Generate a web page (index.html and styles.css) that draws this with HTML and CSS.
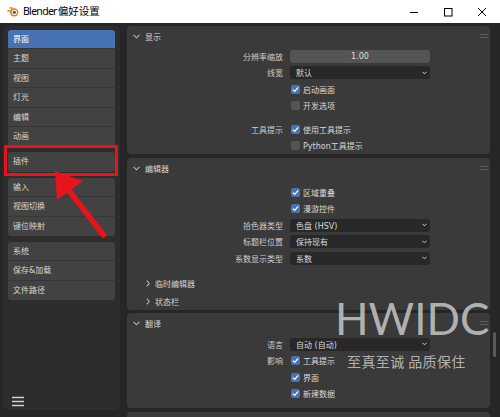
FILE: index.html
```html
<!DOCTYPE html>
<html lang="zh">
<head>
<meta charset="utf-8">
<title>Blender偏好设置</title>
<link rel="stylesheet" href="styles.css">
</head>
<body>
<div class="app">
  <header class="titlebar">
    <svg class="logo" viewBox="0 0 12 11" width="12" height="11">
      <path d="M0.4 4.3 H5 L4.2 5.8 H0.4 Z" fill="#e87d0d"/>
      <path d="M2.2 1.2 L6.5 1.6 L5.6 3 L2.2 2.2 Z" fill="#e87d0d"/>
      <circle cx="7.2" cy="6.4" r="4.2" fill="#e87d0d"/>
      <circle cx="7.4" cy="6.3" r="2.6" fill="#fff"/>
      <circle cx="7.4" cy="6.3" r="1.5" fill="#265787"/>
    </svg>
    <span class="title"><span class="title-latin">Blender</span>偏好设置</span>
    <div class="controls">
      <span class="ctl"><svg width="10" height="10" viewBox="0 0 10 10"><path d="M1 5.5 H9" stroke="#000" stroke-width="1"/></svg></span>
      <span class="ctl"><svg width="10" height="10" viewBox="0 0 10 10"><rect x="1.5" y="1.5" width="7.5" height="7.5" fill="none" stroke="#000" stroke-width="1"/></svg></span>
      <span class="ctl"><svg width="10" height="10" viewBox="0 0 10 10"><path d="M1 1 L9 9 M9 1 L1 9" stroke="#000" stroke-width="1"/></svg></span>
    </div>
  </header>

  <div class="window">
    <nav class="sidebar">
      <div class="nav-groups">
        <div class="group">
          <div class="item active">界面</div>
          <div class="item">主题</div>
          <div class="item">视图</div>
          <div class="item">灯光</div>
          <div class="item">编辑</div>
          <div class="item">动画</div>
        </div>
        <div class="group">
          <div class="item">插件</div>
        </div>
        <div class="group">
          <div class="item">输入</div>
          <div class="item">视图切换</div>
          <div class="item">键位映射</div>
        </div>
        <div class="group">
          <div class="item">系统</div>
          <div class="item">保存&amp;加载</div>
          <div class="item">文件路径</div>
        </div>
      </div>
      <div class="hamburger">
        <svg width="12" height="11" viewBox="0 0 12 11"><path d="M0 1.5 H12 M0 5.5 H12 M0 9.5 H12" stroke="#d0d0d0" stroke-width="1.6"/></svg>
      </div>
    </nav>

    <main class="main">
      <section class="panel p1">
        <div class="panel-header">
          <svg class="chev-down" width="7" height="5" viewBox="0 0 7 5"><path d="M0.6 0.8 L3.5 3.8 L6.4 0.8" fill="none" stroke="#b8b8b8" stroke-width="1.1"/></svg>
          <span>显示</span>
          <svg class="grip" width="8" height="4" viewBox="0 0 8 4"><path d="M0 0.5 H8 M0 3.5 H8" stroke="#5c5c5c" stroke-width="1"/></svg>
        </div>
        <div class="rows">
          <div class="row"><span class="label">分辨率缩放</span><div class="num">1.00</div></div>
          <div class="row"><span class="label">线宽</span><div class="dropdown"><span>默认</span><svg width="5" height="4" viewBox="0 0 5 4"><path d="M0.5 0.8 L2.5 2.8 L4.5 0.8" fill="none" stroke="#cfcfcf" stroke-width="1"/></svg></div></div>
          <div class="row"><span class="label"></span><div class="check-cell"><span class="box on"><svg width="9" height="9" viewBox="0 0 9 9"><path d="M1.8 4.6 L3.7 6.4 L7.2 2.4" fill="none" stroke="#fff" stroke-width="1.3"/></svg></span><span>启动画面</span></div></div>
          <div class="row"><span class="label"></span><div class="check-cell"><span class="box"></span><span>开发选项</span></div></div>
          <div class="row gap-before"><span class="label">工具提示</span><div class="check-cell"><span class="box on"><svg width="9" height="9" viewBox="0 0 9 9"><path d="M1.8 4.6 L3.7 6.4 L7.2 2.4" fill="none" stroke="#fff" stroke-width="1.3"/></svg></span><span>使用工具提示</span></div></div>
          <div class="row"><span class="label"></span><div class="check-cell"><span class="box"></span><span>Python工具提示</span></div></div>
        </div>
      </section>

      <section class="panel p2">
        <div class="panel-header">
          <svg class="chev-down" width="7" height="5" viewBox="0 0 7 5"><path d="M0.6 0.8 L3.5 3.8 L6.4 0.8" fill="none" stroke="#b8b8b8" stroke-width="1.1"/></svg>
          <span>编辑器</span>
          <svg class="grip" width="8" height="4" viewBox="0 0 8 4"><path d="M0 0.5 H8 M0 3.5 H8" stroke="#5c5c5c" stroke-width="1"/></svg>
        </div>
        <div class="rows">
          <div class="row"><span class="label"></span><div class="check-cell"><span class="box on"><svg width="9" height="9" viewBox="0 0 9 9"><path d="M1.8 4.6 L3.7 6.4 L7.2 2.4" fill="none" stroke="#fff" stroke-width="1.3"/></svg></span><span>区域重叠</span></div></div>
          <div class="row"><span class="label"></span><div class="check-cell"><span class="box on"><svg width="9" height="9" viewBox="0 0 9 9"><path d="M1.8 4.6 L3.7 6.4 L7.2 2.4" fill="none" stroke="#fff" stroke-width="1.3"/></svg></span><span>漫游控件</span></div></div>
          <div class="row"><span class="label">拾色器类型</span><div class="dropdown"><span>色盘 (HSV)</span><svg width="5" height="4" viewBox="0 0 5 4"><path d="M0.5 0.8 L2.5 2.8 L4.5 0.8" fill="none" stroke="#cfcfcf" stroke-width="1"/></svg></div></div>
          <div class="row"><span class="label">标题栏位置</span><div class="dropdown"><span>保持现有</span><svg width="5" height="4" viewBox="0 0 5 4"><path d="M0.5 0.8 L2.5 2.8 L4.5 0.8" fill="none" stroke="#cfcfcf" stroke-width="1"/></svg></div></div>
          <div class="row"><span class="label">系数显示类型</span><div class="dropdown"><span>系数</span><svg width="5" height="4" viewBox="0 0 5 4"><path d="M0.5 0.8 L2.5 2.8 L4.5 0.8" fill="none" stroke="#cfcfcf" stroke-width="1"/></svg></div></div>
        </div>
        <div class="subpanels">
          <div class="subpanel"><svg width="4" height="7" viewBox="0 0 4 7"><path d="M0.7 0.6 L3.3 3.5 L0.7 6.4" fill="none" stroke="#b8b8b8" stroke-width="1.1"/></svg><span>临时编辑器</span></div>
          <div class="subpanel"><svg width="4" height="7" viewBox="0 0 4 7"><path d="M0.7 0.6 L3.3 3.5 L0.7 6.4" fill="none" stroke="#b8b8b8" stroke-width="1.1"/></svg><span>状态栏</span></div>
        </div>
      </section>

      <section class="panel p3">
        <div class="panel-header">
          <svg class="chev-down" width="7" height="5" viewBox="0 0 7 5"><path d="M0.6 0.8 L3.5 3.8 L6.4 0.8" fill="none" stroke="#b8b8b8" stroke-width="1.1"/></svg>
          <span>翻译</span>
          <svg class="grip" width="8" height="4" viewBox="0 0 8 4"><path d="M0 0.5 H8 M0 3.5 H8" stroke="#5c5c5c" stroke-width="1"/></svg>
        </div>
        <div class="rows">
          <div class="row"><span class="label">语言</span><div class="dropdown"><span>自动 (自动)</span><svg width="5" height="4" viewBox="0 0 5 4"><path d="M0.5 0.8 L2.5 2.8 L4.5 0.8" fill="none" stroke="#cfcfcf" stroke-width="1"/></svg></div></div>
          <div class="row"><span class="label">影响</span><div class="check-cell"><span class="box on"><svg width="9" height="9" viewBox="0 0 9 9"><path d="M1.8 4.6 L3.7 6.4 L7.2 2.4" fill="none" stroke="#fff" stroke-width="1.3"/></svg></span><span>工具提示</span></div></div>
          <div class="row"><span class="label"></span><div class="check-cell"><span class="box on"><svg width="9" height="9" viewBox="0 0 9 9"><path d="M1.8 4.6 L3.7 6.4 L7.2 2.4" fill="none" stroke="#fff" stroke-width="1.3"/></svg></span><span>界面</span></div></div>
          <div class="row"><span class="label"></span><div class="check-cell"><span class="box on"><svg width="9" height="9" viewBox="0 0 9 9"><path d="M1.8 4.6 L3.7 6.4 L7.2 2.4" fill="none" stroke="#fff" stroke-width="1.3"/></svg></span><span>新建数据</span></div></div>
        </div>
      </section>

      <section class="panel p4"></section>

      <div class="scroll-thumb"></div>
    </main>
  </div>

  <div class="highlight"></div>
  <svg class="arrow" width="500" height="417" viewBox="0 0 500 417">
    <path d="M105 237 L67 188" stroke="#e8141c" stroke-width="5.5"/>
    <polygon points="55,171 57,200 83,181" fill="#e8141c"/>
  </svg>
  <div class="watermark">HWIDC</div>
  <div class="watermark-sub">至真至诚 品质保住</div>
</div>
</body>
</html>
```

FILE: styles.css
```css
* { box-sizing: border-box; }
html, body { margin: 0; padding: 0; }
body {
  width: 500px;
  height: 417px;
  overflow: hidden;
  background: #262626;
  font-family: "DejaVu Sans", "Noto Sans CJK SC", sans-serif;
  font-size: 8px;
  color: #d4d4d4;
}
.app {
  position: relative;
  width: 500px;
  height: 417px;
  display: flex;
  flex-direction: column;
}

/* title bar */
.titlebar {
  flex: none;
  height: 23px;
  background: #ffffff;
  display: flex;
  align-items: center;
  padding-left: 7px;
  color: #000;
  font-family: "Noto Sans", "Noto Sans CJK SC", sans-serif;
  font-size: 10.5px;
}
.logo { margin-right: 4px; }
.title { line-height: 1; }
.title-latin { letter-spacing: -0.7px; margin-right: 1px; }
.controls { margin-left: auto; display: flex; height: 100%; padding-right: 1px; }
.ctl { width: 34px; display: flex; align-items: center; justify-content: center; }

/* body */
.window {
  flex: 1;
  min-height: 0;
  display: flex;
  gap: 4px;
  padding: 3px 3px 0 3px;
}
.sidebar {
  flex: none;
  width: 117px;
  margin-bottom: 7px;
  background: #2d2d2d;
  border-radius: 5px;
  padding: 4px 5px 2px 5px;
  display: flex;
  flex-direction: column;
}
.nav-groups { display: flex; flex-direction: column; gap: 6px; }
.group { display: flex; flex-direction: column; border-radius: 3px; overflow: hidden; }
.item {
  height: 19.4px;
  line-height: 19.4px;
  padding-left: 5px;
  background: #424242;
  color: #d6d6d6;
  border-bottom: 1px solid #373737;
}
.item:last-child { border-bottom: none; }
.item.active { background: #4772b3; color: #ffffff; }
.hamburger { margin-top: auto; padding-left: 4px; height: 12px; }
.hamburger svg { display: block; }

/* main area */
.main {
  flex: 1;
  min-width: 0;
  position: relative;
  overflow: hidden;
  padding: 0 7px 0 3px;
  display: flex;
  flex-direction: column;
}
.panel {
  flex: none;
  background: #3a3a3a;
  border-radius: 4px;
}
.p1 { padding-bottom: 0; }
.p2 { margin-top: 4px; }
.p3 { margin-top: 3px; padding-bottom: 6px; }
.p4 { margin-top: 4px; height: 20px; }

.panel-header {
  height: 20px;
  display: flex;
  align-items: center;
  padding-left: 6px;
  padding-right: 2px;
  color: #d8d8d8;
}
.chev-down { margin-right: 5px; }
.grip { margin-left: auto; }

.rows { display: flex; flex-direction: column; }
.p1 .rows { padding-top: 2px; }
.p2 .rows { padding-top: 6px; }
.p3 .rows { padding-top: 3px; }

.row {
  height: 16.5px;
  display: grid;
  grid-template-columns: 156px 140px;
  column-gap: 7px;
  align-items: center;
}
.row.gap-before { margin-top: 7px; }
.label { text-align: right; color: #cccccc; }

.num {
  height: 13px;
  background: #545454;
  border-radius: 3px;
  text-align: center;
  line-height: 13px;
  color: #dedede;
}
.dropdown {
  height: 13px;
  background: #282828;
  border-radius: 3px;
  display: flex;
  align-items: center;
  justify-content: space-between;
  padding: 0 3px 0 6px;
  color: #d8d8d8;
}
.dropdown svg { display: block; }
.check-cell { display: flex; align-items: center; gap: 3px; padding-left: 1px; color: #d8d8d8; }
.box {
  width: 9px;
  height: 9px;
  border-radius: 2px;
  background: #545454;
  display: block;
  flex: none;
}
.box.on { background: #4772b3; }
.box svg { display: block; }

.subpanels { padding-top: 7.5px; }
.subpanel {
  height: 18px;
  display: flex;
  align-items: center;
  padding-left: 19px;
  gap: 5px;
  color: #d4d4d4;
}

.scroll-thumb {
  position: absolute;
  right: 1px;
  top: 306px;
  width: 3px;
  height: 25px;
  border-radius: 2px;
  background: #5a5a5a;
}

/* overlays */
.highlight {
  position: absolute;
  left: 4px;
  top: 145px;
  width: 114px;
  height: 31px;
  border: 3px solid #e8141c;
}
.arrow { position: absolute; left: 0; top: 0; pointer-events: none; }
.watermark {
  position: absolute;
  left: 335px;
  top: 296px;
  font-family: Lato, "Noto Sans", sans-serif;
  font-weight: 400;
  font-size: 44px;
  line-height: 1;
  color: rgba(210, 210, 210, 0.8);
}
.watermark-sub {
  position: absolute;
  left: 347px;
  top: 354px;
  font-family: "Noto Sans CJK SC", sans-serif;
  font-weight: 400;
  font-size: 14px;
  line-height: 14px;
  letter-spacing: 0.4px;
  color: rgba(210, 210, 210, 0.8);
}
```
